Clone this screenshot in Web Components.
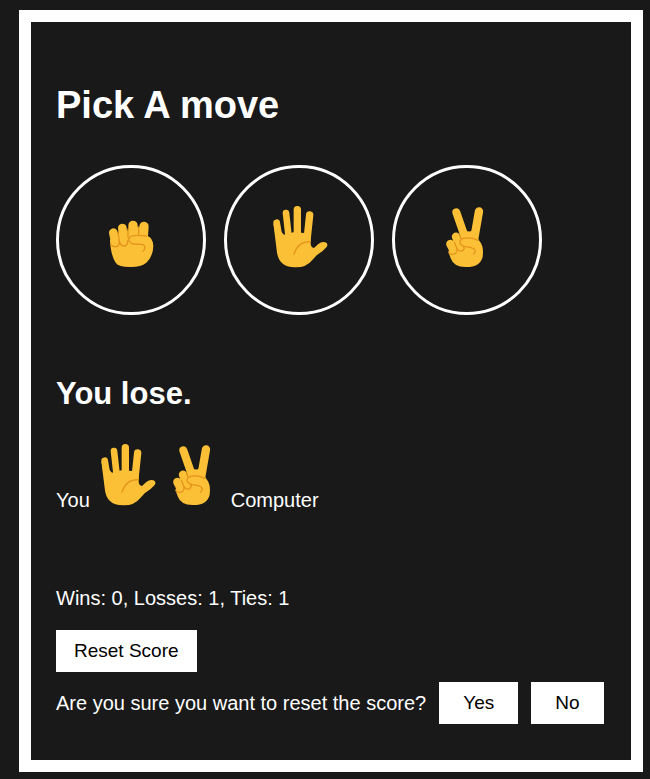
<!DOCTYPE html>
<html lang="en">
<head>
<meta charset="utf-8">
<title>Rock Paper Scissors</title>
<style>
body { margin: 0; background: #191919; color: #fff; font-family: Arial, "Liberation Sans", sans-serif; font-size: 20px; line-height: 28px; }
</style>
</head>
<body>
<game-board></game-board>
<script>
const HANDS = {
  rock: `<svg viewBox="33 -3 180 216" aria-hidden="true">
    <g class="skin">
      <path stroke-width="26" d="M70 83L76 113M97 69L102 112"/>
      <path stroke-width="28" d="M129 61V105M162 64L159 105"/>
      <path class="fill" d="M60 105Q62 150 77 173Q86 186 120 186Q151 187 169 173Q190 153 190 122Q189 99 172 92L147 66L144 66L115 74L112 78L86 84Z"/>
    </g>
    <path class="crease" d="M62 118Q70 128 82 124Q89 120 88 108L84 82M88 108Q92 124 104 123Q114 120 113 107M114 72V97M146 66V89M170 93Q148 90 130 92Q117 95 116 104Q120 115 132 117L153 118Q164 119 165 127Q165 134 159 139"/>
  </svg>`,
  paper: `<svg viewBox="27 27 180 216" aria-hidden="true">
    <g class="skin">
      <path stroke-width="20" d="M50 83L59 135M78 54L87 135"/>
      <path stroke-width="22" d="M112 44V130M149 60L141 135"/>
      <path class="fill" d="M40 85L50 165Q54 217 105 217Q139 218 157 195L170 181Q190 168 200 156Q206 146 196 142Q185 139 175 147L162 159Q152 158 152 145L152 119L134 114L100 112L72 119Z"/>
    </g>
    <path class="crease" d="M102 177Q114 139 151 140"/>
  </svg>`,
  scissors: `<svg viewBox="21 27 180 216" aria-hidden="true">
    <g class="skin">
      <path stroke-width="24" d="M79 52L106 130"/>
      <path stroke-width="25" d="M147 49L132 135"/>
      <path stroke-width="25" d="M78 125L90 155M61 147L72 168"/>
      <path class="fill" d="M55 170L62 190Q71 216 106 216Q151 217 158 185Q162 154 149 139L143 130L126 106Q120 112 114 108L90 125L70 140Z"/>
    </g>
    <path class="crease" d="M57 174Q66 181 76 176Q84 170 80 159L73 142M80 159Q88 172 98 167Q105 162 101 155M94 134L89 121M144 136Q121 126 100 130Q89 134 90 143Q93 152 106 155Q132 157 136 167Q136 172 131 177"/>
  </svg>`
};

class HandIcon extends HTMLElement {
  constructor() {
    super();
    this.attachShadow({ mode: "open" });
  }
  connectedCallback() {
    this.shadowRoot.innerHTML = `<style>
      :host { display: block; flex: none; }
      svg { display: block; width: 60px; height: 72px; }
      .skin { fill: none; stroke: #fbc036; stroke-linecap: round; }
      .skin .fill { fill: #fbc036; stroke: none; }
      .crease { fill: none; stroke: #e5941c; stroke-width: 4; stroke-linecap: round; stroke-linejoin: round; }
    </style>${HANDS[this.getAttribute("move")]}`;
  }
}
customElements.define("hand-icon", HandIcon);

class MoveButton extends HTMLElement {
  constructor() {
    super();
    this.attachShadow({ mode: "open" });
  }
  connectedCallback() {
    const move = this.getAttribute("move");
    this.shadowRoot.innerHTML = `<style>
      :host { display: block; }
      button { display: flex; align-items: center; justify-content: center; width: 150px; height: 150px; padding: 0; border: 3px solid #fff; border-radius: 50%; background: transparent; cursor: pointer; }
    </style><button type="button" aria-label="${move}"><hand-icon move="${move}"></hand-icon></button>`;
  }
}
customElements.define("move-button", MoveButton);

class ActionButton extends HTMLElement {
  constructor() {
    super();
    this.attachShadow({ mode: "open" }).innerHTML = `<style>
      :host { display: block; flex: none; }
      button { display: block; padding: 7px var(--side, 24px); border: 0; background: #fff; color: #000; font: inherit; font-size: 19px; line-height: 28px; cursor: pointer; }
    </style><button type="button"><slot></slot></button>`;
  }
}
customElements.define("action-button", ActionButton);

class RoundResult extends HTMLElement {
  constructor() {
    super();
    this.attachShadow({ mode: "open" });
  }
  connectedCallback() {
    this.shadowRoot.innerHTML = `<style>
      :host { display: block; }
      h2 { margin: 0 0 30px; font-size: 31px; line-height: 36px; }
      .moves { display: flex; align-items: flex-end; gap: 7px; }
    </style>
    <h2><slot></slot></h2>
    <div class="moves"><span>You</span><hand-icon move="${this.getAttribute("player")}"></hand-icon><hand-icon move="${this.getAttribute("computer")}"></hand-icon><span>Computer</span></div>`;
  }
}
customElements.define("round-result", RoundResult);

class ResetConfirm extends HTMLElement {
  constructor() {
    super();
    this.attachShadow({ mode: "open" }).innerHTML = `<style>
      :host { display: flex; align-items: center; gap: 13px; }
    </style>
    <span><slot></slot></span><action-button>Yes</action-button><action-button>No</action-button>`;
  }
}
customElements.define("reset-confirm", ResetConfirm);

class GameBoard extends HTMLElement {
  constructor() {
    super();
    this.attachShadow({ mode: "open" }).innerHTML = `<style>
      :host { display: flow-root; }
      main { margin: 10px 7px 7px 19px; padding: 61px 25px 36px; border: 12px solid #fff; }
      h1 { margin: 0 0 38px; font-size: 38px; line-height: 44px; }
      .moves { display: flex; flex-wrap: wrap; gap: 18px; margin-bottom: 61px; }
      p { margin: 70px 0 18px; }
      .reset { --side: 18px; margin-bottom: 10px; }
    </style>
    <main>
      <h1>Pick A move</h1>
      <div class="moves">
        <move-button move="rock"></move-button>
        <move-button move="paper"></move-button>
        <move-button move="scissors"></move-button>
      </div>
      <round-result player="paper" computer="scissors">You lose.</round-result>
      <p>Wins: 0, Losses: 1, Ties: 1</p>
      <action-button class="reset">Reset Score</action-button>
      <reset-confirm>Are you sure you want to reset the score?</reset-confirm>
    </main>`;
  }
}
customElements.define("game-board", GameBoard);
</script>
</body>
</html>
